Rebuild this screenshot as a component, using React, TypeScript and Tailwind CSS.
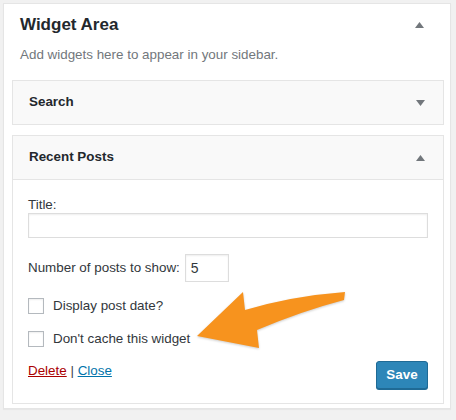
import React from "react";

function Caret({ up }: { up?: boolean }) {
  return (
    <svg width="9" height="6" viewBox="0 0 9 6" className="text-[#72777c]">
      {up ? (
        <path d="M0 6 L4.5 0 L9 6 Z" fill="currentColor" />
      ) : (
        <path d="M0 0 L9 0 L4.5 6 Z" fill="currentColor" />
      )}
    </svg>
  );
}

function Checkbox({ label }: { label: string }) {
  return (
    <label className="flex items-center gap-[9px] h-[16px]">
      <span className="w-[16px] h-[16px] border border-[#b4b9be] bg-white shadow-[inset_0_1px_2px_rgba(0,0,0,0.07)]" />
      <span>{label}</span>
    </label>
  );
}

export default function App() {
  return (
    <div
      className="relative w-[456px] h-[420px] bg-[#f1f1f1] pt-[3px] pl-[3px] text-[13.4px] text-[#32373c]"
      style={{ fontFamily: '"Liberation Sans", Arial, sans-serif' }}
    >
      <div className="w-[448px] h-[406px] bg-white border border-[#e5e5e5] shadow-[0_1px_1px_rgba(0,0,0,0.04)] pl-[8px] pr-[6px]">
        {/* area header */}
        <div className="h-[42px] flex items-center justify-between pl-[8px] pr-[20px]">
          <h2 className="text-[17px] font-bold text-[#23282d]">Widget Area</h2>
          <Caret up />
        </div>
        <p className="pl-[8px] leading-[18px] text-[#72777c]">
          Add widgets here to appear in your sidebar.
        </p>

        <div className="mt-[16px] h-[45px] border border-[#e5e5e5] bg-[#f9f9f9] flex items-center justify-between pl-[16px] pr-[18px]">
          <span className="font-bold text-[#23282d]">Search</span>
          <Caret />
        </div>

        <div className="mt-[10px] border border-[#e5e5e5] bg-white">
          <div className="h-[44px] bg-[#f9f9f9] border-b border-[#e5e5e5] flex items-center justify-between pl-[16px] pr-[18px]">
            <span className="font-bold text-[#23282d]">Recent Posts</span>
            <Caret up />
          </div>
          <div className="px-[15px] pt-[16px] pb-[14px]">
            <div className="leading-[17px]">Title:</div>
            <div className="h-[25px] border border-[#ddd] shadow-[inset_0_1px_2px_rgba(0,0,0,0.07)]" />
            <div className="mt-[16px] flex items-center gap-[5px]">
              <span>Number of posts to show:</span>
              <span className="w-[44px] h-[28px] border border-[#ddd] flex items-center pl-[5px] text-[14px] shadow-[inset_0_1px_2px_rgba(0,0,0,0.07)]">
                5
              </span>
            </div>
            <div className="mt-[16px] flex flex-col gap-[17px]">
              <Checkbox label="Display post date?" />
              <Checkbox label="Don't cache this widget" />
            </div>
            <div className="mt-[14px] flex items-start justify-between">
              <div>
                <a href="#" className="text-[#a00] underline">Delete</a>
                <span className="text-[#444]"> | </span>
                <a href="#" className="text-[#0073aa] underline">Close</a>
              </div>
              <button className="w-[52px] h-[28px] rounded-[3px] bg-[#2d86b8] border border-[#1f6a95] shadow-[0_1px_0_#1f6a95] text-white font-bold text-[13.4px]">
                Save
              </button>
            </div>
          </div>
        </div>
      </div>

      {/* annotation arrow */}
      <svg
        className="absolute left-0 top-0 pointer-events-none"
        width="456"
        height="420"
        viewBox="0 0 456 420"
      >
        <path
          d="M197 336 L243 292 L245 310 Q292 296 345 292 L344 300 Q302 311 257 330 L259 348 Z"
          fill="#f7931e"
          style={{ filter: "drop-shadow(0 1px 1px rgba(0,0,0,0.2))" }}
        />
      </svg>
    </div>
  );
}
